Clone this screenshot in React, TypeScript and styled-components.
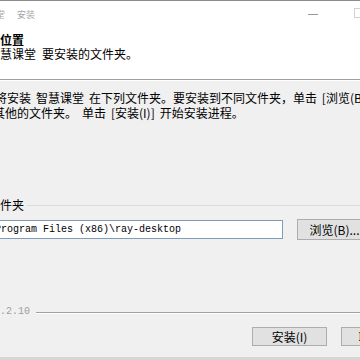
import React from 'react';
import styled, { createGlobalStyle } from 'styled-components';

const GlobalStyle = createGlobalStyle`
    html, body {
        margin: 0;
        padding: 0;
        background: #f0f0f0;
    }
    body {
        font-family: "Noto Sans CJK SC", "Liberation Sans", sans-serif;
        font-size: 12px;
        color: #000;
    }
`;

const Viewport = styled.div`
    width: 360px;
    height: 360px;
    overflow: hidden;
`;

// the dialog is wider than the screen and sits partly off its left edge
const Window = styled.div`
    width: 488px;
    height: 360px;
    margin-left: -60px;
    box-sizing: border-box;
    display: flex;
    flex-direction: column;
    background: #f0f0f0;
    border-top: 1px solid #8c8c8c;
`;

const TitleBar = styled.div`
    height: 26px;
    flex-shrink: 0;
    display: flex;
    align-items: center;
    background: #fff;
`;

const TitleText = styled.span`
    flex: 1;
    padding-left: 29px;
    font-size: 9px;
    color: #a6a6a6;
    word-spacing: 10px;
    white-space: nowrap;
`;

const WinControl = styled.div`
    width: 46px;
    height: 26px;
    display: flex;
    align-items: center;
    justify-content: center;
`;

const MinGlyph = styled.div`
    width: 10px;
    height: 1px;
    background: #9a9a9a;
`;

const MaxGlyph = styled.div`
    width: 10px;
    height: 10px;
    margin-top: -3px;
    box-sizing: border-box;
    border: 1px solid #d0d0d0;
`;

const Header = styled.div`
    height: 52px;
    flex-shrink: 0;
    box-sizing: border-box;
    padding: 6px 0 0 12px;
    background: #fff;
`;

const HeaderTitle = styled.div`
    font-weight: bold;
    line-height: 14px;
    white-space: nowrap;
`;

const HeaderSub = styled.div`
    padding-left: 6px;
    line-height: 14px;
    word-spacing: 3.3px;
    white-space: nowrap;
`;

const Separator = styled.div`
    flex-shrink: 0;
    border-top: 1px solid #a0a0a0;
    border-bottom: 1px solid #fff;
`;

const Content = styled.div`
    display: flex;
    flex-direction: column;
    padding: 9px 0 0 17px;
`;

const Intro = styled.div`
    line-height: 15px;
    word-spacing: 2.3px;
    white-space: nowrap;
`;

const GroupHeader = styled.div`
    margin-top: 78px;
    padding-left: 7px;
    height: 14px;
    display: flex;
    align-items: center;
`;

const GroupLabel = styled.span`
    line-height: 14px;
    white-space: nowrap;
`;

const GroupLine = styled.div`
    flex: 1;
    height: 1px;
    margin: 0 12px 0 3px;
    background: #dcdcdc;
`;

const PathRow = styled.div`
    margin-top: 7px;
    padding-left: 14px;
    height: 21px;
    display: flex;
    align-items: center;
    gap: 14px;
`;

const PathEdit = styled.div`
    width: 312px;
    height: 19px;
    flex-shrink: 0;
    box-sizing: border-box;
    padding-left: 5px;
    display: flex;
    align-items: center;
    background: #fff;
    border: 1px solid #7f9db9;
    font-family: "Liberation Mono", "DejaVu Sans Mono", monospace;
    font-size: 10px;
    white-space: nowrap;
    overflow: hidden;
`;

const Button = styled.div<{ $height?: number }>`
    width: 75px;
    height: ${p => p.$height ?? 19}px;
    flex-shrink: 0;
    box-sizing: border-box;
    display: flex;
    align-items: center;
    justify-content: center;
    background: #e1e1e1;
    border: 1px solid #adadad;
    font-size: 12px;
    white-space: nowrap;
`;

const Footer = styled.div`
    margin-top: 65px;
    padding-left: 54px;
    height: 14px;
    display: flex;
    align-items: center;
`;

const BrandText = styled.span`
    font-family: "Liberation Mono", "DejaVu Sans Mono", monospace;
    font-size: 10px;
    color: #a0a0a0;
    line-height: 14px;
`;

const EtchedLine = styled.div`
    flex: 1;
    margin: 2px 12px 0 6px;
    border-top: 1px solid #a0a0a0;
    border-bottom: 1px solid #fff;
`;

const ButtonRow = styled.div`
    margin-top: 8px;
    padding-right: 12px;
    display: flex;
    justify-content: flex-end;
    gap: 14px;
`;

const BottomEdge = styled.div`
    margin-top: auto;
    height: 3px;
    flex-shrink: 0;
    background: #d6d6d6;
`;

const App: React.FC = () => {
    return (
        <Viewport>
            <GlobalStyle />
            <Window>
                <TitleBar>
                    <TitleText>智慧课堂 安装</TitleText>
                    <WinControl><MinGlyph /></WinControl>
                    <WinControl><MaxGlyph /></WinControl>
                    <WinControl>
                        <svg width="10" height="10" viewBox="0 0 10 10">
                            <path d="M0 0L10 10M10 0L0 10" stroke="#9a9a9a" strokeWidth="1" />
                        </svg>
                    </WinControl>
                </TitleBar>
                <Header>
                    <HeaderTitle>选择安装位置</HeaderTitle>
                    <HeaderSub>选择 智慧课堂 要安装的文件夹。</HeaderSub>
                </Header>
                <Separator />
                <Content>
                    <Intro>
                        Setup 将安装 智慧课堂 在下列文件夹。要安装到不同文件夹，单击 [浏览(B)]
                        <br />
                        并选择其他的文件夹。 单击 [安装(I)] 开始安装进程。
                    </Intro>
                    <GroupHeader>
                        <GroupLabel>目标文件夹</GroupLabel>
                        <GroupLine />
                    </GroupHeader>
                    <PathRow>
                        <PathEdit>C:\Program Files (x86)\ray-desktop</PathEdit>
                        <Button $height={21}>浏览(B)...</Button>
                    </PathRow>
                </Content>
                <Footer>
                    <BrandText>1.2.10</BrandText>
                    <EtchedLine />
                </Footer>
                <ButtonRow>
                    <Button>安装(I)</Button>
                    <Button>取消(C)</Button>
                </ButtonRow>
                <BottomEdge />
            </Window>
        </Viewport>
    );
};

export default App;
